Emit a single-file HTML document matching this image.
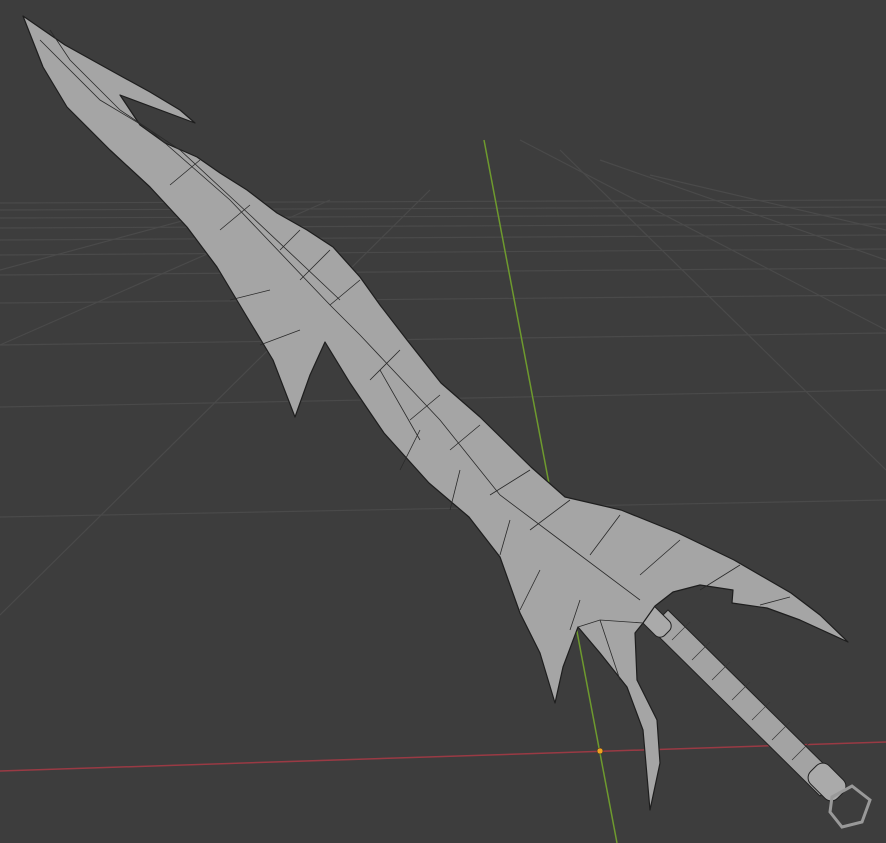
<!DOCTYPE html>
<html><head><style>html,body{margin:0;padding:0;background:#3d3d3d;overflow:hidden}svg{display:block}</style></head>
<body>
<svg width="886" height="843" viewBox="0 0 886 843" xmlns="http://www.w3.org/2000/svg">
<rect width="886" height="843" fill="#3d3d3d"/>
<g stroke="#4a4a4a" stroke-width="1.2" fill="none">
<line x1="0" y1="517" x2="886" y2="500"/>
<line x1="0" y1="407" x2="886" y2="390"/>
<line x1="0" y1="345" x2="886" y2="333"/>
<line x1="0" y1="303" x2="886" y2="295"/>
<line x1="0" y1="275" x2="886" y2="268"/>
<line x1="0" y1="255" x2="886" y2="249"/>
<line x1="0" y1="240" x2="886" y2="235"/>
<line x1="0" y1="228" x2="886" y2="224"/>
<line x1="0" y1="218" x2="886" y2="215"/>
<line x1="0" y1="210" x2="886" y2="207"/>
<line x1="0" y1="203" x2="886" y2="200"/>
<line x1="0" y1="615" x2="430" y2="190"/>
<line x1="0" y1="345" x2="330" y2="200"/>
<line x1="0" y1="270" x2="260" y2="200"/>
<line x1="520" y1="140" x2="886" y2="330"/>
<line x1="600" y1="160" x2="886" y2="260"/>
<line x1="650" y1="175" x2="886" y2="230"/>
<line x1="560" y1="150" x2="886" y2="470"/>
</g>
<line x1="0" y1="771" x2="886" y2="742" stroke="#9a3a44" stroke-width="1.5"/>
<line x1="484" y1="140" x2="617" y2="843" stroke="#6e9a2e" stroke-width="1.5"/>
<!-- handle -->
<path d="M650,628 L668,610 L838,778 L820,796 Z" fill="#a3a3a3" stroke="#222" stroke-width="1"/>
<g stroke="#333" stroke-width="0.6">
<line x1="672" y1="640" x2="690" y2="622"/><line x1="692" y1="660" x2="710" y2="642"/><line x1="712" y1="680" x2="730" y2="662"/><line x1="732" y1="700" x2="750" y2="682"/><line x1="752" y1="720" x2="770" y2="702"/><line x1="772" y1="740" x2="790" y2="722"/><line x1="792" y1="760" x2="810" y2="742"/>
</g>
<rect x="638" y="611" width="34" height="20" rx="7" transform="rotate(45 655 621)" fill="#aaa" stroke="#222"/>
<rect x="808" y="769" width="38" height="26" rx="9" transform="rotate(45 827 782)" fill="#aaa" stroke="#222"/>
<path d="M832,797 L852,786 L870,800 L862,822 L842,827 L830,812 Z" fill="none" stroke="#999" stroke-width="3"/>
<!-- blade -->
<path d="M23,16 L65,45 L110,70 L150,92 L180,110 L195,123 L120,95 L140,125 L165,143 L197,157 L220,173 L247,190 L277,213 L307,230 L333,247 L360,277 L380,305 L407,340 L441,383 L480,417 L531,467 L565,497 L621,510 L678,533 L734,560 L791,593 L820,615 L848,642 L800,620 L767,608 L732,603 L733,590 L700,585 L673,592 L655,606 L643,623 L635,633 L637,680 L657,720 L660,763 L650,810 L643,730 L627,687 L600,653 L578,627 L563,667 L555,703 L540,653 L520,613 L500,557 L469,517 L429,483 L384,433 L350,383 L325,342 L310,375 L295,417 L273,360 L247,317 L217,267 L187,227 L150,187 L110,150 L67,107 L43,67 Z" fill="#a5a5a5" stroke="#1e1e1e" stroke-width="1.2" stroke-linejoin="round"/>
<g stroke="#2a2a2a" stroke-width="0.8" fill="none">
<path d="M40,40 L100,100 L150,130 L230,200 L330,305 L360,335 L440,420 L500,495 L560,540 L640,600"/>
<path d="M50,30 L70,60 L120,110 L180,150 L250,215 L340,300"/>
<path d="M300,230 L280,250 M250,205 L220,230 M200,160 L170,185 M330,250 L300,280 M360,280 L330,305 M400,350 L370,380 M440,395 L410,420 M480,425 L450,450 M530,470 L490,495 M570,500 L530,530 M620,515 L590,555 M680,540 L640,575 M740,565 L700,590 M790,597 L760,605"/>
<path d="M270,290 L230,300 M300,330 L260,345 M380,370 L420,440 M420,430 L400,470 M460,470 L450,510 M510,520 L500,555 M540,570 L520,610 M580,600 L570,630"/>
<path d="M578,627 L600,620 L643,623 M600,620 L620,680"/>
</g>
<circle cx="600" cy="751" r="3" fill="#f0a020" stroke="#222" stroke-width="0.5"/>
</svg>
</body></html>
